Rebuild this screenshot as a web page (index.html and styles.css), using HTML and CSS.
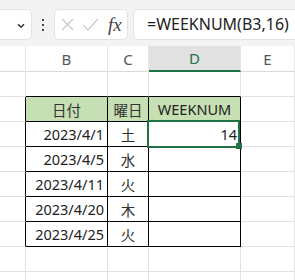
FILE: index.html
```html
<!DOCTYPE html>
<html lang="ja">
<head>
<meta charset="utf-8">
<link rel="stylesheet" href="styles.css">
</head>
<body>
<div class="app">
  <div class="toolbar">
    <div class="namebox">
      <svg class="chev" width="8" height="6" viewBox="0 0 8 6"><path d="M1 1.2 L4 4.2 L7 1.2" fill="none" stroke="#333" stroke-width="1.6"/></svg>
    </div>
    <div class="dots"><span></span><span></span><span></span></div>
    <div class="fxbox">
      <svg class="ico" width="13" height="13" viewBox="0 0 13 13"><path d="M1 1 L12 12 M12 1 L1 12" stroke="#c8c8c8" stroke-width="1.2" fill="none"/></svg>
      <svg class="ico ok" width="17" height="13" viewBox="0 0 17 13"><path d="M1 7 L6 12 L16 1" stroke="#c8c8c8" stroke-width="1.2" fill="none"/></svg>
      <span class="fx">fx</span>
    </div>
    <div class="formula">=WEEKNUM(B3,16)</div>
  </div>
  <div class="sheet">
    <div class="c h"></div>
    <div class="c h">B</div>
    <div class="c h">C</div>
    <div class="c h hd">D</div>
    <div class="c h">E</div>

    <div class="c"></div><div class="c bb"></div><div class="c bb"></div><div class="c bb"></div><div class="c"></div>

    <div class="c bl"></div><div class="c t th jp">日付</div><div class="c t th jp">曜日</div><div class="c t th">WEEKNUM</div><div class="c"></div>

    <div class="c bl"></div><div class="c t r">2023/4/1</div><div class="c t m jp">土</div><div class="c t r">14</div><div class="c"></div>
    <div class="c bl"></div><div class="c t r">2023/4/5</div><div class="c t m jp">水</div><div class="c t r"></div><div class="c"></div>
    <div class="c bl"></div><div class="c t r">2023/4/11</div><div class="c t m jp">火</div><div class="c t r"></div><div class="c"></div>
    <div class="c bl"></div><div class="c t r">2023/4/20</div><div class="c t m jp">木</div><div class="c t r"></div><div class="c"></div>
    <div class="c bl"></div><div class="c t r">2023/4/25</div><div class="c t m jp">火</div><div class="c t r"></div><div class="c"></div>

    <div class="c"></div><div class="c"></div><div class="c"></div><div class="c"></div><div class="c"></div>
    <div class="c"></div><div class="c"></div><div class="c"></div><div class="c"></div><div class="c"></div>

    <div class="sel"><div class="handle"></div></div>
  </div>
</div>
</body>
</html>
```
FILE: styles.css
```css
html, body {
  margin: 0;
  padding: 0;
  background: #fff;
}
.app {
  width: 295px;
  height: 280px;
  overflow: hidden;
  font-family: "Noto Sans", "Noto Sans CJK JP", sans-serif;
  color: #222;
}
.toolbar {
  height: 46px;
  box-sizing: border-box;
  background: #f3f3f3;
  display: flex;
  align-items: flex-start;
  padding-top: 9px;
}
.toolbar > div { flex-shrink: 0; }
.namebox {
  margin-left: -12px;
  width: 44px;
  height: 31px;
  box-sizing: border-box;
  background: #fff;
  border: 1px solid #e2e2e2;
  border-radius: 5px;
  display: flex;
  align-items: center;
  justify-content: flex-end;
  padding-right: 6px;
}
.chev { display: block; margin-top: 2px; }
.dots {
  width: 22px;
  height: 31px;
  display: flex;
  flex-direction: column;
  align-items: center;
  justify-content: center;
  gap: 3px;
}
.dots span {
  width: 2px;
  height: 2px;
  background: #444;
}
.fxbox {
  width: 74px;
  height: 31px;
  box-sizing: border-box;
  background: #fff;
  border: 1px solid #e2e2e2;
  border-radius: 5px;
  display: flex;
  align-items: center;
  padding-left: 6px;
  gap: 8px;
}
.ico { display: block; }
.fx {
  font-family: "Liberation Serif", serif;
  font-style: italic;
  font-size: 19px;
  color: #444;
  margin-left: 1px;
  line-height: 1;
}
.formula {
  margin-left: 5px;
  width: 200px;
  height: 31px;
  box-sizing: border-box;
  background: #fff;
  border: 1px solid #e2e2e2;
  border-radius: 5px;
  padding-left: 13px;
  font-size: 16px;
  line-height: 29px;
  color: #222;
  white-space: nowrap;
}
.sheet {
  position: relative;
  display: grid;
  grid-template-columns: 26px 82px 41px 92px 54px;
  grid-template-rows: 26px;
  grid-auto-rows: 25px;
}
.c {
  box-sizing: border-box;
  border-right: 1px solid #e1e1e1;
  border-bottom: 1px solid #e1e1e1;
  display: flex;
  align-items: center;
  padding: 0 3px;
  font-size: 14.5px;
  white-space: nowrap;
}
.jp {
  color: #333;
}
.h {
  justify-content: center;
  color: #555;
  font-size: 15px;
  background: #fff;
  border-right-color: #e6e6e6;
  border-bottom-color: #dadada;
}
.hd {
  background: #e1e1e1;
  color: #217346;
  border-bottom: 2px solid #217346;
}
.bb { border-bottom-color: #000; }
.bl { border-right-color: #000; }
.t {
  border-right-color: #000;
  border-bottom-color: #000;
}
.th {
  background: #c6e0b4;
  justify-content: center;
}
.r { justify-content: flex-end; }
.m { justify-content: center; }
.sel {
  position: absolute;
  left: 147px;
  top: 74px;
  width: 93px;
  height: 28px;
  box-sizing: border-box;
  border: 2px solid #217346;
}
.handle {
  position: absolute;
  right: -4px;
  bottom: -3px;
  width: 6px;
  height: 6px;
  background: #217346;
}
```
